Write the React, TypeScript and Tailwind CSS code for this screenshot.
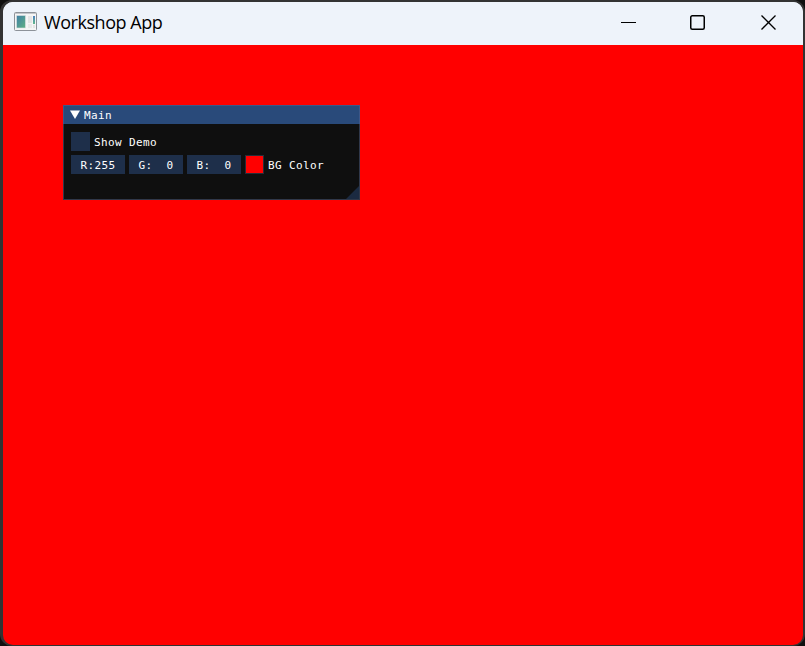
import type { ReactNode } from "react";

function AppIcon() {
  return (
    <svg className="ml-[11px] mt-[2px] shrink-0" width="23" height="19" viewBox="0 0 23 19">
      <defs>
        <linearGradient id="pane" x1="0" y1="0" x2="1" y2="1">
          <stop offset="0" stopColor="#3f7fa6" />
          <stop offset="1" stopColor="#60b183" />
        </linearGradient>
        <linearGradient id="strip" x1="0" y1="0" x2="0" y2="1">
          <stop offset="0" stopColor="#4a7fc0" />
          <stop offset="1" stopColor="#62b98a" />
        </linearGradient>
      </defs>
      <rect x="0.5" y="0.5" width="22" height="18" rx="1" fill="#f5f5f5" stroke="#8d9299" />
      <rect x="1" y="1" width="21" height="1" fill="#c3c6ca" />
      <rect x="2.5" y="3.5" width="9" height="12.5" fill="url(#pane)" stroke="#dfe3e4" strokeWidth="0.6" />
      <rect x="14" y="4" width="4" height="7" fill="#e4e4e4" />
      <rect x="14" y="12" width="4" height="4" fill="#e9e9e9" />
      <rect x="19" y="4" width="2" height="8" fill="url(#strip)" />
      <rect x="19" y="13" width="2" height="3" fill="#e4e4e4" />
    </svg>
  );
}

function TitleBar() {
  return (
    <header className="flex h-[43px] shrink-0 items-start bg-[#eef3fa] pt-2">
      <AppIcon />
      <h1 className="ml-[7px] w-[120px] whitespace-nowrap font-['Open_Sans','Noto_Sans',sans-serif] text-[18px] font-normal leading-[24px] tracking-[-0.45px] text-black">
        Workshop App
      </h1>
      <div className="ml-auto mr-[26px] mt-[5px] flex">
        <svg className="mr-[53px]" width="16" height="16" viewBox="0 0 16 16">
          <path d="M0 7.5h15" stroke="#000" />
        </svg>
        <svg className="mr-[55px] -mt-px" width="16" height="16" viewBox="0 0 16 16">
          <rect x="0.75" y="1.75" width="13.5" height="13.5" rx="1.5" fill="none" stroke="#000" strokeWidth="1.5" />
        </svg>
        <svg className="-mt-px" width="16" height="16" viewBox="0 0 16 16">
          <path d="M0.5 1.5l14 14M14.5 1.5l-14 14" stroke="#000" strokeWidth="1.3" />
        </svg>
      </div>
    </header>
  );
}

function Channel({ children }: { children: ReactNode }) {
  return (
    <div className="h-[19px] w-[54px] whitespace-pre bg-[#1e2f4a] text-center leading-[22px]">
      {children}
    </div>
  );
}

function MainPanel() {
  return (
    <section className="relative h-[95px] w-[297px] border border-[#30384a] bg-[#0f0f0f] font-['DejaVu_Sans_Mono',monospace] text-[11px] tracking-[0.378px] text-white">
      <div className="-mx-px -mt-px flex h-[19px] items-center border border-b-0 border-[#3c5788] bg-[#294a7a] pl-[6px]">
        <svg className="-mt-[2px]" width="10" height="9" viewBox="0 0 10 9">
          <path d="M0 0.5h10L5 9z" fill="#fff" />
        </svg>
        <span className="ml-[4px] pt-[2px] leading-[18px]">Main</span>
      </div>
      <div className="flex flex-col gap-1 pl-[7px] pt-2">
        <label className="flex h-[19px] gap-1 leading-[22px]">
          <span className="size-[19px] bg-[#1e2f4a]" />
          Show Demo
        </label>
        <div className="flex gap-1 leading-[22px]">
          <Channel>R:255</Channel>
          <Channel>G:  0</Channel>
          <Channel>B:  0</Channel>
          <span className="size-[19px] border border-[#262d38] bg-[#ff0000]" />
          <span>BG Color</span>
        </div>
      </div>
      <svg className="absolute bottom-0 right-0" width="13" height="13" viewBox="0 0 13 13">
        <path d="M13 0v13H0z" fill="#1b2a41" />
      </svg>
    </section>
  );
}

export default function App() {
  return (
    <div className="h-[646px] w-[805px] overflow-hidden bg-[#101010]">
      <div className="flex h-[646px] w-[805px] flex-col rounded-[12px] bg-[#333333] pb-px pl-[3px] pr-[2px] pt-[2px]">
        <div className="flex grow flex-col overflow-hidden rounded-[10px] bg-[linear-gradient(#eef3fa_43px,#ff0000_43px)]">
          <TitleBar />
          <main className="pl-[60px] pt-[60px]">
            <MainPanel />
          </main>
        </div>
      </div>
    </div>
  );
}
